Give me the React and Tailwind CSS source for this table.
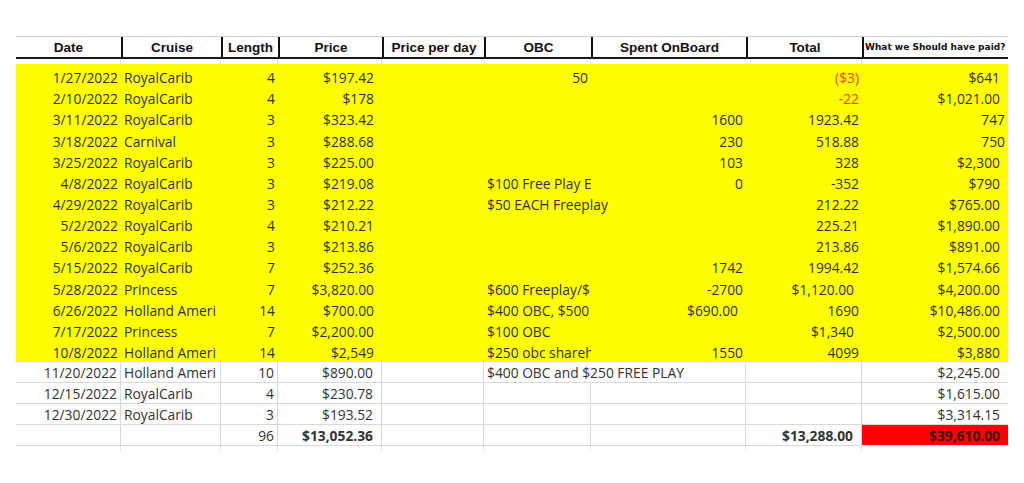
import React from "react";
import clsx from "clsx";

const widths = [
  "w-[105px]",
  "w-[100px]",
  "w-[57px]",
  "w-[104px]",
  "w-[102px]",
  "w-[107px]",
  "w-[155px]",
  "w-[116px]",
  "w-[146px]",
];

const headers = ["Date", "Cruise", "Length", "Price", "Price per day", "OBC", "Spent OnBoard", "Total"];

const yellowRows = [
  ["1/27/2022", "RoyalCarib", "4", "$197.42", "", "50", "", "($3)", "$641"],
  ["2/10/2022", "RoyalCarib", "4", "$178", "", "", "", "-22", "$1,021.00"],
  ["3/11/2022", "RoyalCarib", "3", "$323.42", "", "", "1600", "1923.42", "747"],
  ["3/18/2022", "Carnival", "3", "$288.68", "", "", "230", "518.88", "750"],
  ["3/25/2022", "RoyalCarib", "3", "$225.00", "", "", "103", "328", "$2,300"],
  ["4/8/2022", "RoyalCarib", "3", "$219.08", "", "$100 Free Play E", "0", "-352", "$790"],
  ["4/29/2022", "RoyalCarib", "3", "$212.22", "", "$50 EACH Freeplay", "", "212.22", "$765.00"],
  ["5/2/2022", "RoyalCarib", "4", "$210.21", "", "", "", "225.21", "$1,890.00"],
  ["5/6/2022", "RoyalCarib", "3", "$213.86", "", "", "", "213.86", "$891.00"],
  ["5/15/2022", "RoyalCarib", "7", "$252.36", "", "", "1742", "1994.42", "$1,574.66"],
  ["5/28/2022", "Princess", "7", "$3,820.00", "", "$600 Freeplay/$", "-2700", "$1,120.00", "$4,200.00"],
  ["6/26/2022", "Holland Ameri", "14", "$700.00", "", "$400 OBC, $500 I", "$690.00", "1690", "$10,486.00"],
  ["7/17/2022", "Princess", "7", "$2,200.00", "", "$100 OBC", "", "$1,340", "$2,500.00"],
  ["10/8/2022", "Holland Ameri", "14", "$2,549", "", "$250 obc shareh", "1550", "4099", "$3,880"],
];

const whiteRows = [
  ["11/20/2022", "Holland Ameri", "10", "$890.00", "", "$400 OBC and $250 FREE PLAY", "", "", "$2,245.00"],
  ["12/15/2022", "RoyalCarib", "4", "$230.78", "", "", "", "", "$1,615.00"],
  ["12/30/2022", "RoyalCarib", "3", "$193.52", "", "", "", "", "$3,314.15"],
];

const totalRow = ["", "", "96", "$13,052.36", "", "", "", "$13,288.00", "$39,610.00"];

function Row({ row, white, total }) {
  return (
    <div
      className={clsx(
        "flex",
        white ? "h-[21px] border-b border-[#d9d9d9]" : "h-[21.15px]"
      )}
    >
      {row.map((v, i) => {
        const left = i === 1 || (i === 5 && v !== "" && !/^-?\d+$/.test(v));
        const spill = left && i === 5 && row[i + 1] === "";
        const money = v.startsWith("$");
        const red = i === 7 && (v === "($3)" || v === "-22");
        const bold = total && (i === 3 || i === 7 || i === 8);
        const redBg = total && i === 8;
        return (
          <div
            key={i}
            className={clsx(
              widths[i],
              "shrink-0 flex items-end h-full",
              left ? "justify-start pl-[3px]" : "justify-end",
              !left && (money ? "pr-[8px]" : "pr-[3px]"),
              spill ? "overflow-visible" : "overflow-hidden",
              white && i < 8 && !spill && "border-r border-[#d9d9d9]",
              redBg && "bg-[#ff0000]"
            )}
          >
            {v !== "" && (
              <span
                className={clsx(
                  "whitespace-nowrap leading-[16px] pb-[1px]",
                  red ? "text-[#ee4a22]" : redBg ? "text-[#3a1010]" : "text-[#333333]",
                  bold && "font-bold"
                )}
              >
                {v}
              </span>
            )}
          </div>
        );
      })}
    </div>
  );
}

function Strip({ h }) {
  return (
    <div className={clsx("flex", h)}>
      {widths.map((w, i) => (
        <div key={i} className={clsx(w, "shrink-0 h-full", i < 8 && "border-r border-[#e6e6e6]")} />
      ))}
    </div>
  );
}

export default function App() {
  return (
    <div className="w-[1024px] h-[483px] bg-white overflow-hidden pt-[36px] pl-[16px] font-['Open_Sans',sans-serif] text-[13.8px]">
      <div className="w-[992px]">
        <div className="flex h-[23px] border-t border-[#cfcfcf] border-b-2 border-b-[#1a1a1a] font-['Liberation_Sans',Arial,sans-serif] font-bold text-[13.5px] text-[#111111]">
          {headers.map((h, i) => (
            <div
              key={h}
              className={clsx(
                widths[i],
                "shrink-0 flex items-center justify-center pt-[2px]",
                i > 0 && "border-l-2 border-[#111111]"
              )}
            >
              {h}
            </div>
          ))}
          <div
            className={clsx(
              widths[8],
              "shrink-0 flex items-center pt-[2px] pl-[1px] border-l-2 border-[#111111] font-['DejaVu_Sans',sans-serif] text-[9px] whitespace-nowrap"
            )}
          >
            What we Should have paid?
          </div>
        </div>
        <Strip h="h-[5px]" />
        <div className="bg-[#ffff00] pt-[2px]">
          {yellowRows.map((r, i) => (
            <Row key={i} row={r} />
          ))}
        </div>
        {whiteRows.map((r, i) => (
          <Row key={i} row={r} white />
        ))}
        <Row row={totalRow} white total />
        <Strip h="h-[5px]" />
      </div>
    </div>
  );
}
